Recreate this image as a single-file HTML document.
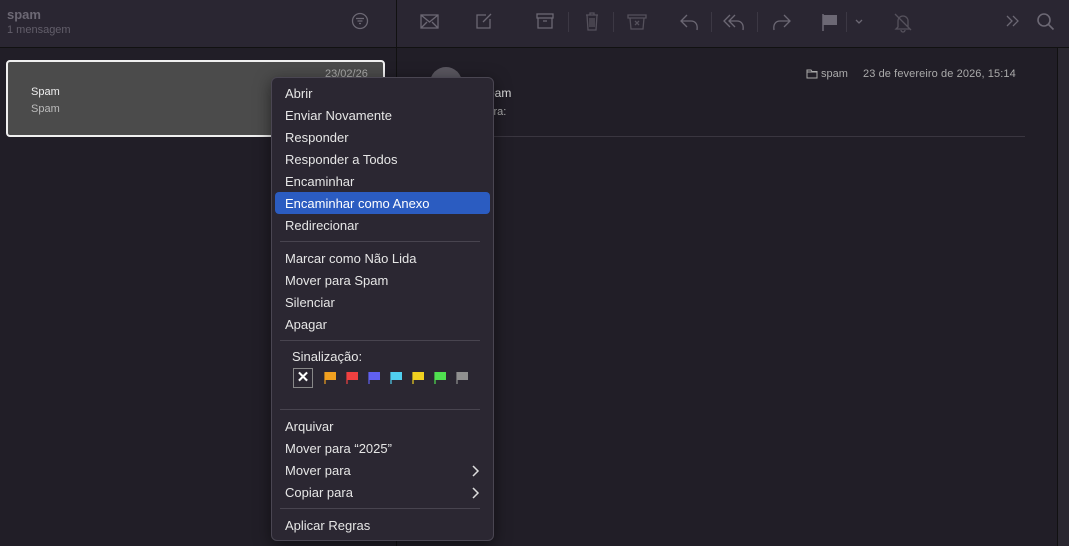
<!DOCTYPE html>
<html><head><meta charset="utf-8"><style>
*{margin:0;padding:0;box-sizing:border-box}
body{width:1069px;height:546px;background:#211e27;font-family:"Liberation Sans",sans-serif;position:relative;overflow:hidden;color:#ddd}
.abs{position:absolute}
.tb{left:0;top:0;width:1069px;height:48px;background:#2a2632;border-bottom:1px solid #111}
.vl{left:396px;top:0;width:1px;height:546px;background:#111}
.menu{left:271px;top:77px;width:223px;height:464px;background:#2b2732;border:1px solid #4a4652;border-radius:6px;box-shadow:0 4px 16px rgba(0,0,0,.5)}
.it{position:absolute;left:13px;font-size:13px;color:#e6e6e6;line-height:22px;height:22px}
.sep{position:absolute;left:8px;right:13px;height:1px;background:#48444f}
svg{position:absolute}
</style></head><body>
<div class="abs tb"></div>
<div class="abs vl"></div>
<div class="abs" style="left:7px;top:7px;font-size:13px;font-weight:bold;color:#6c6874">spam</div>
<div class="abs" style="left:7px;top:24px;font-size:11px;color:#625e6a">1 mensagem</div>
<svg style="left:351px;top:12px" width="18" height="18" viewBox="0 0 18 18" fill="none" stroke="#6c6874" stroke-width="1.3"><circle cx="9" cy="9" r="7.5"/><path d="M5 6.5h8M6.5 9h5M8 11.5h2"/></svg>
<!-- toolbar icons -->
<svg style="left:419px;top:13px" width="22" height="18" viewBox="0 0 22 18" fill="none" stroke="#6c6874" stroke-width="1.3"><rect x="2" y="2" width="17" height="13"/><path d="M2 2l8.5 7 8.5-7M2 15l6-6M19 15l-6-6"/></svg>
<svg style="left:474px;top:11px" width="20" height="20" viewBox="0 0 20 20" fill="none" stroke="#6c6874" stroke-width="1.3"><path d="M12 4H3v13h13V8M9 11l8-8"/></svg>
<svg style="left:535px;top:12px" width="20" height="18" viewBox="0 0 20 18" fill="none" stroke="#6c6874" stroke-width="1.3"><rect x="2" y="2" width="16" height="4"/><path d="M3 6v10h14V6M8 9h4"/></svg>
<div class="abs" style="left:568px;top:12px;width:1px;height:20px;background:#3c3844"></div>
<svg style="left:583px;top:11px" width="18" height="20" viewBox="0 0 18 20" fill="none" stroke="#55515c" stroke-width="1.3"><path d="M3 4h12M7 4V2h4v2M4 4l1 15h8l1-15M7 7v9M9 7v9M11 7v9"/></svg>
<div class="abs" style="left:613px;top:12px;width:1px;height:20px;background:#3c3844"></div>
<svg style="left:626px;top:12px" width="22" height="20" viewBox="0 0 22 20" fill="none" stroke="#55515c" stroke-width="1.3"><path d="M2 3h18v3H2zM4 6l1 11h12l1-11M9 9l4 4M13 9l-4 4"/></svg>
<svg style="left:679px;top:12px" width="22" height="20" viewBox="0 0 22 20" fill="none" stroke="#6c6874" stroke-width="1.3"><path d="M8 3L2 9l6 6M2 9h10c4 0 7 3 6 9"/></svg>
<div class="abs" style="left:711px;top:12px;width:1px;height:20px;background:#3c3844"></div>
<svg style="left:722px;top:12px" width="26" height="20" viewBox="0 0 26 20" fill="none" stroke="#6c6874" stroke-width="1.3"><path d="M8 3L2 9l6 6M13 3L7 9l6 6M7 9h8c4 0 7 3 6 9"/></svg>
<div class="abs" style="left:757px;top:12px;width:1px;height:20px;background:#3c3844"></div>
<svg style="left:770px;top:12px" width="22" height="20" viewBox="0 0 22 20" fill="none" stroke="#6c6874" stroke-width="1.3"><path d="M14 3l6 6-6 6M20 9H10c-4 0-7 3-6 9"/></svg>
<svg style="left:820px;top:12px" width="20" height="20" viewBox="0 0 20 20"><path d="M3 2v17" stroke="#6c6874" stroke-width="1.5"/><path d="M3 3h14v10H3z" fill="#6c6874"/></svg>
<div class="abs" style="left:846px;top:12px;width:1px;height:20px;background:#3c3844"></div>
<svg style="left:854px;top:18px" width="10" height="8" viewBox="0 0 10 8" fill="none" stroke="#6c6874" stroke-width="1.3"><path d="M2 2l3 3 3-3"/></svg>
<svg style="left:892px;top:11px" width="22" height="22" viewBox="0 0 22 22" fill="none" stroke="#55515c" stroke-width="1.3"><path d="M6 16V10a5 5 0 0 1 10 0v6l2 2H4zM9 19a2 2 0 0 0 4 0M3 3l16 16"/></svg>
<svg style="left:1005px;top:14px" width="16" height="14" viewBox="0 0 16 14" fill="none" stroke="#6c6874" stroke-width="1.3"><path d="M2 2l5 5-5 5M8 2l5 5-5 5"/></svg>
<svg style="left:1036px;top:12px" width="20" height="20" viewBox="0 0 20 20" fill="none" stroke="#6c6874" stroke-width="1.6"><circle cx="8" cy="8" r="6"/><path d="M12.5 12.5l5 5"/></svg>
<!-- card -->
<div class="abs" style="left:6px;top:60px;width:379px;height:77px;background:#4b4b4b;border:2px solid #f0f0f0;border-radius:4px"></div>
<div class="abs" style="left:31px;top:86px;font-size:11px;color:#eee">Spam</div>
<div class="abs" style="left:31px;top:103px;font-size:11px;color:#bbb">Spam</div>
<div class="abs" style="left:325px;top:68px;font-size:11px;color:#aaa">23/02/26</div>
<!-- right pane -->
<div class="abs" style="left:430px;top:67px;width:32px;height:32px;border-radius:50%;background:#5a5760"></div>
<div class="abs" style="left:480px;top:86px;font-size:12px;color:#ddd">Spam</div>
<div class="abs" style="left:480px;top:106px;font-size:11px;color:#aaa">Para:</div>
<svg style="left:806px;top:69px" width="12" height="10" viewBox="0 0 12 10" fill="none" stroke="#aaa" stroke-width="1"><path d="M1 1h4l1 1.5h5V9H1z M1 3h10"/></svg>
<div class="abs" style="left:821px;top:68px;font-size:11px;color:#aaa">spam</div>
<div class="abs" style="left:863px;top:68px;font-size:11px;color:#aaa;letter-spacing:.1px">23 de fevereiro de 2026, 15:14</div>
<div class="abs" style="left:430px;top:136px;width:595px;height:1px;background:#3a3640"></div>
<div class="abs" style="left:1057px;top:48px;width:12px;height:498px;background:#2a2730;border-left:1px solid #111"></div>
<!-- menu -->
<div class="abs menu">
<div class="abs" style="left:3px;top:114px;width:215px;height:22px;background:#2b5cc1;border-radius:4px"></div>
<div class="it" style="top:5px">Abrir</div>
<div class="it" style="top:27px">Enviar Novamente</div>
<div class="it" style="top:49px">Responder</div>
<div class="it" style="top:71px">Responder a Todos</div>
<div class="it" style="top:93px">Encaminhar</div>
<div class="it" style="top:115px;color:#fff">Encaminhar como Anexo</div>
<div class="it" style="top:137px">Redirecionar</div>
<div class="sep" style="top:163px"></div>
<div class="it" style="top:170px">Marcar como Não Lida</div>
<div class="it" style="top:192px">Mover para Spam</div>
<div class="it" style="top:214px">Silenciar</div>
<div class="it" style="top:236px">Apagar</div>
<div class="sep" style="top:262px"></div>
<div class="it" style="top:268px;left:20px">Sinalização:</div>
<div class="abs" style="left:21px;top:290px;width:20px;height:20px;border:1px solid #888;color:#fff;font-size:15px;font-weight:bold;text-align:center;line-height:18px">✕</div>
<svg style="left:52px;top:293px" width="150" height="14" viewBox="0 0 150 14">
<g><path d="M1 1v12" stroke="#f0a020" stroke-width="1.2"/><path d="M1 1h11v8H1z" fill="#f0a020"/></g>
<g transform="translate(22 0)"><path d="M1 1v12" stroke="#f04040" stroke-width="1.2"/><path d="M1 1h11v8H1z" fill="#f04040"/></g>
<g transform="translate(44 0)"><path d="M1 1v12" stroke="#6060f0" stroke-width="1.2"/><path d="M1 1h11v8H1z" fill="#6060f0"/></g>
<g transform="translate(66 0)"><path d="M1 1v12" stroke="#50d0f0" stroke-width="1.2"/><path d="M1 1h11v8H1z" fill="#50d0f0"/></g>
<g transform="translate(88 0)"><path d="M1 1v12" stroke="#f0d020" stroke-width="1.2"/><path d="M1 1h11v8H1z" fill="#f0d020"/></g>
<g transform="translate(110 0)"><path d="M1 1v12" stroke="#50e050" stroke-width="1.2"/><path d="M1 1h11v8H1z" fill="#50e050"/></g>
<g transform="translate(132 0)"><path d="M1 1v12" stroke="#909090" stroke-width="1.2"/><path d="M1 1h11v8H1z" fill="#909090"/></g>
</svg>
<div class="sep" style="top:331px"></div>
<div class="it" style="top:338px">Arquivar</div>
<div class="it" style="top:360px">Mover para “2025”</div>
<div class="it" style="top:382px">Mover para</div>
<div class="it" style="top:404px">Copiar para</div>
<svg style="left:199px;top:387px" width="10" height="12" viewBox="0 0 10 12" fill="none" stroke="#ddd" stroke-width="1.5"><path d="M2 1l5 5-5 5"/></svg>
<svg style="left:199px;top:409px" width="10" height="12" viewBox="0 0 10 12" fill="none" stroke="#ddd" stroke-width="1.5"><path d="M2 1l5 5-5 5"/></svg>
<div class="sep" style="top:430px"></div>
<div class="it" style="top:437px">Aplicar Regras</div>
</div>
</body></html>
